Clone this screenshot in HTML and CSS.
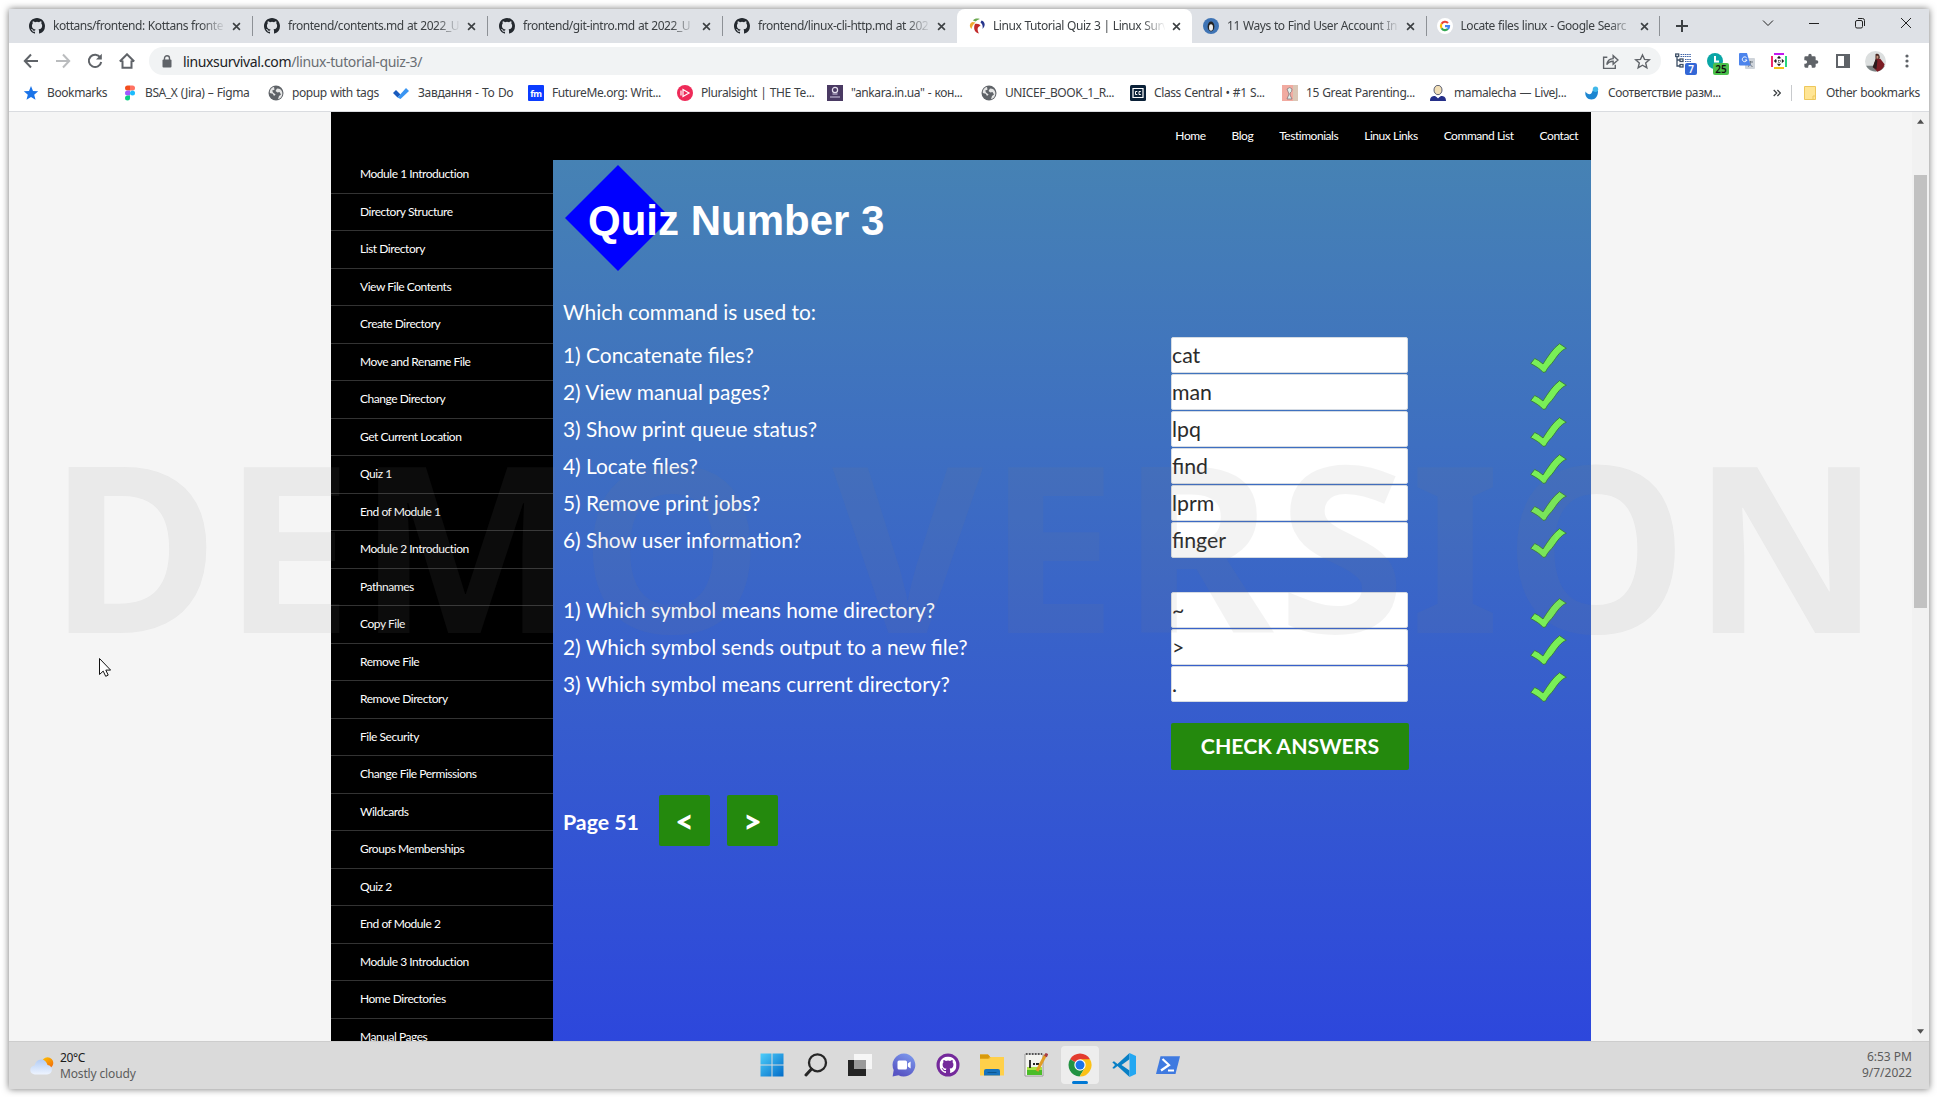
FILE: index.html
```html
<!DOCTYPE html>
<html lang="en">
<head>
<meta charset="utf-8">
<title>Linux Tutorial Quiz 3 | Linux Survival</title>
<link rel="stylesheet" href="styles.css">
</head>
<body>
<svg width="0" height="0" class="defs">
  <symbol id="github" viewBox="0 0 16 16"><path fill="currentColor" d="M8 0C3.58 0 0 3.58 0 8c0 3.54 2.29 6.53 5.47 7.59.4.07.55-.17.55-.38v-1.49c-2.01.37-2.53-.49-2.69-.94-.09-.23-.48-.94-.82-1.13-.28-.15-.68-.52-.01-.53.63-.01 1.08.58 1.23.82.72 1.21 1.87.87 2.33.66.07-.52.28-.87.51-1.07-1.78-.2-3.64-.89-3.64-3.95 0-.87.31-1.59.82-2.15-.08-.2-.36-1.02.08-2.12 0 0 .67-.21 2.2.82a7.6 7.6 0 0 1 4 0c1.53-1.04 2.2-.82 2.2-.82.44 1.1.16 1.92.08 2.12.51.56.82 1.27.82 2.15 0 3.07-1.87 3.75-3.65 3.95.29.25.54.73.54 1.48v2.2c0 .21.15.46.55.38A8 8 0 0 0 16 8c0-4.42-3.58-8-8-8z"/></symbol>
  <symbol id="close" viewBox="0 0 10 10"><path d="M1.2 1.2l7.6 7.6M8.8 1.2L1.2 8.8" stroke="#3c4043" stroke-width="1.8"/></symbol>
  <symbol id="globe" viewBox="0 0 16 16"><circle cx="8" cy="8" r="7.5" fill="#5f6368"/><path d="M6 1.800c-3 1-4.500 3.500-4.200 6.200l3 .8 1.200 2.200 1.600-1.600L5 7.500 4.200 5.500 6.500 4.800zM9 3.500L7.500 6l2 1.500 2-.5L13 9.500 11 11l-1 3.200c3-.7 4.600-3.500 4.300-6.500C14 5 12 3.500 9 3.500z" fill="#f4f4f4" opacity=".9"/></symbol>
  <symbol id="check" viewBox="0 0 37 30"><path d="M.7 20.500l4-5 3.800 2 4.500 3.500C18 13 23 5.500 29.500.7l6.800 4.600c-5 1.700-9 7.500-12.300 12.300-3 4.300-6.500 6.500-8.500 11.400l-2.500.3C9.500 25 5 23 .7 20.500z" fill="#79ef57" stroke="#35772f" stroke-width=".8"/></symbol>
</svg>

<div class="screen">
  <div class="tabs">
    <div class="tab"><svg class="fav"><use href="#github"/></svg><span class="tab-name">kottans/frontend: Kottans fronte</span><svg class="x"><use href="#close"/></svg></div>
    <div class="tab"><svg class="fav"><use href="#github"/></svg><span class="tab-name">frontend/contents.md at 2022_U</span><svg class="x"><use href="#close"/></svg></div>
    <div class="tab"><svg class="fav"><use href="#github"/></svg><span class="tab-name">frontend/git-intro.md at 2022_U</span><svg class="x"><use href="#close"/></svg></div>
    <div class="tab before-active"><svg class="fav"><use href="#github"/></svg><span class="tab-name">frontend/linux-cli-http.md at 202</span><svg class="x"><use href="#close"/></svg></div>
    <div class="tab active"><svg class="fav" viewBox="0 0 16 16"><path d="M4 2.500C5.500.5 8 0 11 1 9 1.500 8 2.500 6.500 3.500z" fill="#6aa84f"/><path d="M12.500 2.500c3.500 1 4.500 5 1 8.500.5-3 0-5-2-6.500z" fill="#26358c"/><path d="M3.500 4l3 .5C4 6.500 3 8.500 2.500 11 0 8.500.5 5 3.500 4z" fill="#f0a830"/><path d="M6 6c3-.5 5 .5 5.500 2-3.500.5-3.500 4-1.500 7.500C5.500 15 4 10 6 6z" fill="#c22a2a"/></svg><span class="tab-name">Linux Tutorial Quiz 3 | Linux Surv</span><svg class="x"><use href="#close"/></svg></div>
    <div class="tab late"><svg class="fav" viewBox="0 0 16 16"><circle cx="8" cy="8" r="8" fill="#3f74b5"/><ellipse cx="8" cy="8.500" rx="3.400" ry="5" fill="#222"/><ellipse cx="8" cy="9.500" rx="2" ry="3.200" fill="#eee"/></svg><span class="tab-name">11 Ways to Find User Account In</span><svg class="x"><use href="#close"/></svg></div>
    <div class="tab late"><svg class="fav" viewBox="0 0 16 16"><circle cx="8" cy="8" r="8" fill="#fff"/><g fill="none" stroke-width="2.200"><path d="M4.600 5.800A4 4 0 0 1 11 5" stroke="#ea4335"/><path d="M4.600 5.800a4 4 0 0 0 0 4.400" stroke="#fbbc05"/><path d="M4.600 10.200A4 4 0 0 0 10.800 11" stroke="#34a853"/><path d="M10.800 11A4 4 0 0 0 12 8.200H8" stroke="#4285f4"/></g></svg><span class="tab-name">Locate files linux - Google Searc</span><svg class="x"><use href="#close"/></svg></div>
    <svg class="plus" viewBox="0 0 12 12"><path d="M6 0v12M0 6h12" stroke="#3c4043" stroke-width="2"/></svg>
    <div class="win-controls">
      <svg viewBox="0 0 12 12"><path d="M1 3.500l5 5 5-5"/></svg>
      <svg viewBox="0 0 12 12"><path d="M1 6.500h10"/></svg>
      <svg viewBox="0 0 12 12"><rect x="1.500" y="3.500" width="7" height="7.500" rx="1.500"/><path d="M4 1.500h4.500a2 2 0 0 1 2 2V9"/></svg>
      <svg viewBox="0 0 12 12"><path d="M1 1l10 10M11 1L1 11"/></svg>
    </div>
  </div>

  <div class="toolbar">
    <svg viewBox="0 0 16 16"><path d="M15 8H2M8 1.500L1.800 8 8 14.500"/></svg>
    <svg class="dim" viewBox="0 0 16 16"><path d="M1 8h13M8 1.500L14.200 8 8 14.500"/></svg>
    <svg viewBox="0 0 16 16"><path d="M13.300 4.500A6.200 6.200 0 1 0 14.200 9"/><path d="M14.800.8v5.700H9z" fill="#5f6368" stroke="none"/></svg>
    <svg viewBox="0 0 16 16"><path d="M3.500 7.500v7.300h9V7.500M.8 8.500L8 1.300l7.200 7.200M3.500 8H1M12.500 8H15"/></svg>
    <div class="omnibox">
      <svg class="lock" viewBox="0 0 10 13"><rect x="0.500" y="4.500" width="9" height="8" rx="1" fill="#5f6368"/><path d="M2.500 5V3.300a2.500 2.500 0 0 1 5 0V5" fill="none" stroke="#5f6368" stroke-width="1.400"/></svg>
      <span class="url"><b>linuxsurvival.com</b>/linux-tutorial-quiz-3/</span>
      <svg class="share" viewBox="0 0 16 16"><path d="M5 4H1.500v10.500h11V11M4.500 11c.5-4 2.500-5.500 6-5.700V2.500L15 6.500l-4.500 4V7.800C8 7.800 6 8.500 4.500 11z"/></svg>
      <svg class="star" viewBox="0 0 16 16"><path d="M8 1.800l1.900 4.200 4.600.4-3.500 3 1.100 4.500L8 11.500l-4.100 2.400L5 9.400l-3.500-3 4.600-.4z"/></svg>
    </div>
    <div class="extensions">
      <span class="ext"><svg viewBox="0 0 16 16"><g stroke="#3d4f66" stroke-width="1.300" fill="none"><rect x=".7" y="1" width="3" height="2.500"/><path d="M2 4v9h3M2 7h3"/><rect x="5" y="6" width="3" height="2.500"/><rect x="5" y="11.500" width="3" height="2.500"/></g><path d="M5.500 1.500H16M5.500 3.500H16M10 6.500h6M10 8.500h6" stroke="#3d62a8" stroke-dasharray="1.500 .7" stroke-width="1.200"/></svg><i class="badge blue">7</i></span>
      <span class="ext"><svg viewBox="0 0 16 16"><circle cx="8" cy="8" r="8" fill="#0aa6a6"/><path d="M8 3v5.500h4" stroke="#fff" stroke-width="2" fill="none"/></svg><i class="badge green">25</i></span>
      <span class="ext"><svg viewBox="0 0 16 16"><rect x="6" y="5" width="10" height="11" rx="1" fill="#cfd4da"/><path d="M9 9h5M11.500 8v1.500c0 2-1 3-2.500 4M10 10.500l3.500 3.500" stroke="#6c7680" fill="none"/><path d="M1 0h7l3.500 12.500H1a1 1 0 0 1-1-1V1a1 1 0 0 1 1-1z" fill="#4c84ec"/><path d="M7.600 4.800A2.400 2.400 0 1 0 8 7H5.800" stroke="#fff" fill="none"/></svg></span>
      <span class="ext"><svg viewBox="0 0 16 16"><path d="M3 1h10" stroke="#c218f0" stroke-width="2"/><path d="M1 3v11" stroke="#ee2a6b" stroke-width="2"/><path d="M15 3v11" stroke="#27d67d" stroke-width="2"/><path d="M3 15h10" stroke="#f2c014" stroke-width="2"/><path d="M8 2.800l2.200 2.400H5.800zM8 13.200l2.200-2.400H5.800zM2.800 8l2.400-2.200v4.400zM13.200 8l-2.400-2.200v4.400z" fill="#222"/><path d="M5 8h6M8 5v6" stroke="#222" stroke-dasharray="1 1"/></svg></span>
      <span class="ext"><svg viewBox="0 0 24 24"><path fill="#5f6368" d="M20.500 11H19V7a2 2 0 0 0-2-2h-4V3.500a2.500 2.500 0 0 0-5 0V5H4a2 2 0 0 0-2 2v3.800h1.500a2.700 2.700 0 0 1 0 5.400H2V20a2 2 0 0 0 2 2h3.800v-1.500a2.700 2.700 0 0 1 5.400 0V22H17a2 2 0 0 0 2-2v-4h1.500a2.500 2.500 0 0 0 0-5z"/></svg></span>
      <span class="ext"><svg viewBox="0 0 16 16"><rect x="2" y="2" width="12" height="12" fill="none" stroke="#5f6368" stroke-width="2"/><path d="M9 2h5v12H9z" fill="#5f6368"/></svg></span>
      <span class="ext avatar"><svg viewBox="0 0 22 22"><circle cx="11" cy="11" r="11" fill="#dcdfdf"/><path d="M1.200 15.500h19.600A11 11 0 0 1 1.200 15.500z" fill="#7b8283"/><path d="M11 3.500c2.500-1.500 4.500.5 4.500 3.500L14 10l-3 1z" fill="#4a2a24"/><path d="M12 5h2v3h-2z" fill="#c9937c"/><path d="M11 9l5-1 4.500 6A11 11 0 0 1 13 21.800L8.500 17z" fill="#7c1c24"/><path d="M11 9l2 1-1 9-4-2z" fill="#2b1a1c"/></svg></span>
      <span class="ext"><svg viewBox="0 0 16 16"><g fill="#5f6368"><circle cx="8" cy="3" r="1.600"/><circle cx="8" cy="8" r="1.600"/><circle cx="8" cy="13" r="1.600"/></g></svg></span>
    </div>
  </div>

  <div class="bookmarks">
    <div class="bm"><svg viewBox="0 0 16 16"><path fill="#1a73e8" d="M8 1l2 5 5.200.3-4 3.400 1.300 5.100L8 12l-4.500 2.800 1.300-5.100-4-3.400L6 6z"/></svg><span>Bookmarks</span></div>
    <div class="bm figma"><svg viewBox="0 0 16 16"><path d="M5.500.5H8v5H5.500a2.500 2.500 0 0 1 0-5z" fill="#f24e1e"/><path d="M8 .5h2.500a2.500 2.500 0 0 1 0 5H8z" fill="#ff7262"/><path d="M5.500 5.500H8v5H5.500a2.500 2.500 0 0 1 0-5z" fill="#a259ff"/><circle cx="10.500" cy="8" r="2.500" fill="#1abcfe"/><path d="M5.500 10.500H8V13a2.500 2.500 0 1 1-2.500-2.500z" fill="#0acf83"/></svg><span>BSA_X (Jira) – Figma</span></div>
    <div class="bm"><svg><use href="#globe"/></svg><span>popup with tags</span></div>
    <div class="bm todo"><svg viewBox="0 0 16 16"><path d="M0 8l3-3 4.500 4.500-3 3z" fill="#185abd"/><path d="M4.500 12.500L13 3l3 3-8.500 8z" fill="#3a95f2"/></svg><span>Завдання - To Do</span></div>
    <div class="bm"><svg viewBox="0 0 16 16"><rect width="16" height="16" rx="1" fill="#0b3cff"/><text x="8" y="11.500" text-anchor="middle" class="fm">fm</text></svg><span>FutureMe.org: Writ...</span></div>
    <div class="bm"><svg viewBox="0 0 16 16"><circle cx="8" cy="8" r="8" fill="#ee2a58"/><path d="M6 4.500L12 8l-6 3.500zM4 5.500v5" fill="none" stroke="#fff" stroke-width="1.200"/></svg><span>Pluralsight | THE Te...</span></div>
    <div class="bm"><svg viewBox="0 0 16 16"><rect width="16" height="16" fill="#4a3a63"/><circle cx="8" cy="5" r="2.600" fill="none" stroke="#e6e1ee" stroke-width="1.200"/><path d="M5.500 9h5M3 12h10" stroke="#a79cba" stroke-width="1.400"/></svg><span>"ankara.in.ua" - кон...</span></div>
    <div class="bm"><svg><use href="#globe"/></svg><span>UNICEF_BOOK_1_R...</span></div>
    <div class="bm"><svg viewBox="0 0 16 16"><rect width="16" height="16" rx="1.500" fill="#0b2138"/><path d="M3 3.500h10v9H3z" fill="none" stroke="#fff" stroke-width="1.200"/><path d="M7.300 6.500H5.500v3h1.800M10.800 6.500H9v3h1.800" fill="none" stroke="#fff"/></svg><span>Class Central • #1 S...</span></div>
    <div class="bm"><svg viewBox="0 0 16 16"><rect width="16" height="16" fill="#f1aaa0"/><rect x="11" width="5" height="16" fill="#dbc6b5"/><path d="M5 4q3-3 5 0 0 3-2 4v2l2 4H5l2-5z" fill="#dff0ed" stroke="#8b7377" stroke-width=".8"/></svg><span>15 Great Parenting...</span></div>
    <div class="bm"><svg viewBox="0 0 16 16"><ellipse cx="8" cy="5" rx="4" ry="4.700" fill="#f2dfb6" stroke="#333a55" stroke-width=".8"/><path d="M0 16c0-4 2-5 5-5l3 2 3-2c3 0 5 1 5 5z" fill="#252f88"/><path d="M6.500 11h3L8 13.500z" fill="#fff"/></svg><span>mamalecha — LiveJ...</span></div>
    <div class="bm"><svg viewBox="0 0 16 16"><path d="M1.500 6.500C4 10.500 8 10 8.500 5.500L14 6c0 5.500-2.500 8.500-6.500 8.500S.500 11 1.500 6.500z" fill="#1c86d1"/><circle cx="11.500" cy="4.200" r="2.700" fill="#42b8e9"/></svg><span>Соответствие разм...</span></div>
    <svg class="more" viewBox="0 0 8 8"><path d="M.7 1l3 3-3 3M4.400 1l3 3-3 3" fill="none" stroke="#3c4043" stroke-width="1.300"/></svg>
    <div class="bm other"><svg viewBox="0 0 12 14"><path d="M.5.500h11v13H.5z" fill="#ffe594" stroke="#edc75c"/><path d="M9 13.500V10h2.500" fill="none" stroke="#edc75c"/></svg><span>Other bookmarks</span></div>
  </div>

  <div class="viewport">
    <div class="site">
      <div class="topnav"><a>Home</a><a>Blog</a><a>Testimonials</a><a>Linux Links</a><a>Command List</a><a>Contact</a></div>
      <div class="sidebar">
        <a>Module 1 Introduction</a><a>Directory Structure</a><a>List Directory</a><a>View File Contents</a><a>Create Directory</a><a>Move and Rename File</a><a>Change Directory</a><a>Get Current Location</a><a>Quiz 1</a><a>End of Module 1</a><a>Module 2 Introduction</a><a>Pathnames</a><a>Copy File</a><a>Remove File</a><a>Remove Directory</a><a>File Security</a><a>Change File Permissions</a><a>Wildcards</a><a>Groups Memberships</a><a>Quiz 2</a><a>End of Module 2</a><a>Module 3 Introduction</a><a>Home Directories</a><a>Manual Pages</a>
      </div>
      <div class="content">
        <div class="heading"><svg class="diamond" viewBox="0 0 106 106"><path d="M53 0l53 53-53 53L0 53z" fill="#00f"/></svg><h1>Quiz Number 3</h1></div>
        <p class="lead">Which command is used to:</p>
        <div class="questions">
          <div class="q"><span>1) Concatenate files?</span><div class="answer">cat</div><svg><use href="#check"/></svg></div>
          <div class="q"><span>2) View manual pages?</span><div class="answer">man</div><svg><use href="#check"/></svg></div>
          <div class="q"><span>3) Show print queue status?</span><div class="answer">lpq</div><svg><use href="#check"/></svg></div>
          <div class="q"><span>4) Locate files?</span><div class="answer">find</div><svg><use href="#check"/></svg></div>
          <div class="q"><span>5) Remove print jobs?</span><div class="answer">lprm</div><svg><use href="#check"/></svg></div>
          <div class="q"><span>6) Show user information?</span><div class="answer">finger</div><svg><use href="#check"/></svg></div>
        </div>
        <div class="questions">
          <div class="q"><span>1) Which symbol means home directory?</span><div class="answer">~</div><svg><use href="#check"/></svg></div>
          <div class="q"><span>2) Which symbol sends output to a new file?</span><div class="answer">&gt;</div><svg><use href="#check"/></svg></div>
          <div class="q"><span>3) Which symbol means current directory?</span><div class="answer">.</div><svg><use href="#check"/></svg></div>
        </div>
        <div class="submit">CHECK ANSWERS</div>
        <div class="pager"><span>Page 51</span><div class="step">&lt;</div><div class="step">&gt;</div></div>
      </div>
    </div>
    <div class="scrollbar"><svg viewBox="0 0 8 5"><path d="M4 0l4 5H0z"/></svg><div class="thumb"></div><svg viewBox="0 0 8 5"><path d="M0 0h8L4 5z"/></svg></div>
  </div>

  <div class="taskbar">
    <div class="weather">
      <svg viewBox="0 0 24 18"><defs><linearGradient id="cl" x2="0" y2="1"><stop stop-color="#b3cdf5"/><stop offset="1" stop-color="#eef4ff"/></linearGradient><linearGradient id="sun" x2=".6" y2="1"><stop stop-color="#ffc400"/><stop offset="1" stop-color="#f26f0c"/></linearGradient></defs><circle cx="17.500" cy="6" r="5.800" fill="url(#sun)"/><path d="M5 17.500a4.500 4.500 0 0 1-.5-9C5.500 4.500 8 2.500 11 2.500c3.500 0 5.500 2 6.500 5.500 6 .5 6 9-.5 9.500z" fill="url(#cl)"/></svg>
      <div><span class="temp">20°C</span><span>Mostly cloudy</span></div>
    </div>
    <div class="apps">
      <div class="app"><svg viewBox="0 0 24 24"><defs><linearGradient id="win" gradientUnits="userSpaceOnUse" x1="0" y1="0" x2="24" y2="24"><stop stop-color="#4fd0fb"/><stop offset="1" stop-color="#0069c7"/></linearGradient></defs><path d="M.5.500h11v11H.5zM12.500.500h11v11h-11zM.5 12.500h11v11H.5zM12.500 12.500h11v11h-11z" fill="url(#win)"/></svg></div>
      <div class="app"><svg viewBox="0 0 24 24"><circle cx="13.500" cy="9.800" r="8.500" fill="none" stroke="#262626" stroke-width="2.300"/><path d="M7.500 16L2 22" stroke="#262626" stroke-width="3" stroke-linecap="round"/></svg></div>
      <div class="app"><svg viewBox="0 0 24 24"><rect y="7" width="18" height="16" fill="#242424"/><rect x="6" y="1" width="18" height="15" fill="#f6f6f6"/><rect x="6" y="7" width="12" height="9" fill="#9a9a9a"/></svg></div>
      <div class="app"><svg viewBox="0 0 24 24"><defs><linearGradient id="chat" x1="1" x2=".5" y2="1"><stop stop-color="#7f9ff0"/><stop offset="1" stop-color="#5855c4"/></linearGradient></defs><path d="M12 .5a11.500 11.500 0 1 1-5.500 21.700L.6 23.500 1.700 17A11.500 11.500 0 0 1 12 .5z" fill="url(#chat)"/><rect x="5.500" y="7.500" width="9.500" height="9" rx="1.500" fill="#fff"/><path d="M15.800 10.500l2.800-2v7l-2.800-2z" fill="#fff"/></svg></div>
      <div class="app white"><svg viewBox="0 0 24 24"><circle cx="12" cy="12" r="11.500" fill="#74299b"/><use href="#github" x="3.500" y="3.500" width="17" height="17"/></svg></div>
      <div class="app"><svg viewBox="0 0 24 24"><path d="M0 1.500h8l2 2.500h14v18H0z" fill="#f1b52c"/><path d="M0 1.500h8l2 2-2 2H0z" fill="#d89a0c"/><path d="M0 6h9l2-2h13v18.500H0z" fill="#ffd04a"/><path d="M4 22.500V18a2 2 0 0 1 2-2h12a2 2 0 0 1 2 2v4.500z" fill="#1672bd"/><path d="M7.500 19.500h9" stroke="#0a568f"/></svg></div>
      <div class="app"><svg viewBox="0 0 24 24"><path d="M1 1h18v22H1z" fill="#f4f4f0" stroke="#999"/><path d="M3 14h15v8H3z" fill="#a7e343"/><path d="M3 17h15v5H3z" fill="#4bbd29"/><path d="M2 1h16" stroke="#555" stroke-dasharray="1.500 1.500" stroke-width="2"/><path d="M6 7v8M9 11h2M12 11h3" stroke="#222" stroke-width="1.800"/><path d="M21.500 2L13 18" stroke="#e19d26" stroke-width="3"/><path d="M23 .5l-1.500 3" stroke="#a63e48" stroke-width="3"/></svg></div>
      <div class="app current"><svg viewBox="0 0 24 24"><path d="M12 12L2.100 6.200A11.500 11.500 0 0 1 22 6.300z" fill="#e33b2e"/><path d="M12 12L2.100 6.200A11.500 11.500 0 0 0 11.500 23.500l5.500-8.700z" fill="#229342"/><path d="M12 6.300h10A11.500 11.500 0 0 1 11.500 23.500L17 14.800z" fill="#fbc116"/><circle cx="12" cy="12" r="5.700" fill="#fff"/><circle cx="12" cy="12" r="4.500" fill="#1a73e8"/></svg></div>
      <div class="app"><svg viewBox="0 0 24 24"><path d="M17.500 0L5.500 11 2 8.300.3 9.200 3 12l-2.700 2.900L2 15.800 5.500 13l12 11V17.500L9.500 12l8-5.700z" fill="#087fc5"/><path d="M17.500 0L24 3v18l-6.500 3z" fill="#23a7f2"/></svg></div>
      <div class="app"><svg viewBox="0 0 24 24"><path d="M4.500 3.200H24L19.500 21H0z" fill="#3f7ae0"/><path d="M6.500 6l6.500 6-8 5.500M12 17.500h6" fill="none" stroke="#fff" stroke-width="2.200"/></svg></div>
    </div>
    <div class="clock"><span>6:53 PM</span><span>9/7/2022</span></div>
  </div>
  <div class="watermark">DEMO VERSION</div>
  <svg class="cursor" viewBox="0 0 12 19"><path d="M.5.500v16l3.700-3.400 2.500 5.200 2.500-1.200-2.400-5h4.800z" fill="#fff" stroke="#111"/></svg>
</div>
</body>
</html>
```
FILE: styles.css
```css
* { box-sizing: border-box; }
body { margin: 0; background: #fff; width: 1937px; height: 1097px; padding: 9px 8px 8px 9px; overflow: hidden; font-family: "Noto Sans", sans-serif; font-size: 12px; }
.defs { position: absolute; }
svg { display: block; flex: none; }
.screen { position: relative; width: 1920px; height: 1080px; display: flex; flex-direction: column; box-shadow: 0 0 7px rgba(0,0,0,.55); background: #fff; }

/* tab strip */
.tabs { height: 34px; background: #dee1e6; display: flex; align-items: center; padding-left: 8px; color: #3c4043; }
.tab { position: relative; width: 235px; height: 34px; display: flex; align-items: center; padding-left: 12px; }
.tab.late { width: 233.5px; padding-left: 11px; }
.tab:not(.before-active):not(.active)::after { content: ""; position: absolute; right: -1px; top: 7px; width: 1px; height: 20px; background: #8d9196; }
.tab.active { background: #fff; border-radius: 8px 8px 0 0; }
.fav { width: 16px; height: 16px; color: #24292f; }
.tab-name { margin-left: 8px; width: 172px; white-space: nowrap; letter-spacing: -.45px; word-spacing: .5px; line-height: 20px; -webkit-mask-image: linear-gradient(to right, #000 148px, transparent 173px); mask-image: linear-gradient(to right, #000 148px, transparent 173px); }
.x { width: 9px; height: 9px; margin-left: 7px; }
.plus { width: 12px; height: 12px; margin-left: 17px; }
.win-controls { margin-left: auto; display: flex; gap: 34px; padding-right: 17px; height: 100%; padding-top: 8px; }
.win-controls svg { width: 12px; height: 12px; fill: none; stroke: #222; }

/* address bar */
.toolbar { height: 36px; display: flex; align-items: center; padding-left: 14px; }
.toolbar > svg { width: 16px; height: 16px; margin-right: 16px; fill: none; stroke: #5f6368; stroke-width: 2; }
.toolbar > .dim { stroke: #babcbe; }
.omnibox { margin-left: -2px; width: 1512px; height: 28px; border-radius: 14px; background: #f1f3f4; display: flex; align-items: center; padding-left: 13px; }
.lock { width: 10px; height: 13px; }
.url { margin-left: 11px; font-size: 14px; letter-spacing: -.37px; color: #6a6e73; }
.url b { font-weight: 400; color: #202124; }
.share, .star { width: 17px; height: 17px; fill: none; stroke: #5f6368; stroke-width: 1.3; }
.share { margin-left: auto; }
.star { margin: 0 10px 0 15px; }
.extensions { display: grid; grid-template-columns: repeat(8, 32px); margin-left: 6px; }
.ext { position: relative; height: 22px; display: flex; align-items: center; justify-content: center; }
.ext svg { width: 16px; height: 16px; }
.avatar svg { width: 21px; height: 21px; }
.badge { position: absolute; left: 18px; top: 13px; width: 12px; height: 12px; border-radius: 2px; font: 600 10px/12px "Noto Sans", sans-serif; text-align: center; color: #fff; background: #3367d6; }
.badge.green { left: 14px; width: 16px; background: #4bc04b; color: #111; }

/* bookmarks */
.bookmarks { height: 33px; border-bottom: 1px solid #dadce0; display: grid; align-items: center; padding: 0 0 5px 14px; color: #3c4043;
  grid-template-columns: 99px 146px 125px 135px 149px 150px 154px 149px 152px 148px 154px 189px 18px 138px; }
.bm { display: flex; align-items: center; height: 20px; white-space: nowrap; letter-spacing: -.4px; word-spacing: .6px; }
.bm svg { width: 16px; height: 16px; margin-right: 8px; }
.figma svg { margin-right: 7px; }
.todo { letter-spacing: -.3px; }
.todo svg { margin-right: 9px; }
.more { width: 8px; height: 8px; }
.other { border-left: 1px solid #c8cacd; height: 16px; padding-left: 12px; }
.bm.other svg { width: 12px; height: 14px; margin-right: 10px; }
.fm { font: 700 9px "Noto Sans", sans-serif; fill: #fff; }

/* web page */
.viewport { height: 929px; background: #f5f5f5; display: flex; overflow: hidden; }
.site { width: 1260px; margin-left: 322px; background: #000; display: grid; grid-template-columns: 222px 1fr; grid-template-rows: 48px 881px; font-family: Lato, sans-serif; color: #fff; }
.topnav { grid-column: 1 / 3; display: flex; justify-content: flex-end; align-items: center; gap: 26px; padding: 0 13px 2px 0; font-size: 12px; letter-spacing: -.46px; }
.sidebar { margin-top: -4px; height: 885px; overflow: hidden; font-size: 12px; letter-spacing: -.46px; }
.sidebar a { display: flex; align-items: center; height: 37.5px; padding: 0 0 1px 29px; border-bottom: 1px solid #333; }
.content { background: linear-gradient(#4682b4, #2d47dc); padding: 5px 0 0 10px; font-size: 20.9px; }
.heading { display: flex; height: 106px; align-items: center; }
.diamond { width: 106px; height: 106px; margin-left: 2px; }
h1 { margin: 6px 0 0 -83px; font: bold 42px/48px "Liberation Sans", sans-serif; white-space: nowrap; position: relative; }
.lead { margin: 26px 0 0; line-height: 30px; }
.questions { margin-top: 10px; display: grid; grid-auto-rows: 37px; }
.questions + .questions { margin-top: 33px; }
.q { display: grid; grid-template-columns: 608px 359px 37px; align-items: start; line-height: 36px; }
.answer { width: 237px; height: 36px; border: 1px solid #d5dbe3; border-radius: 2px; background: #fff; color: #2b2b2b; font-size: 21.3px; line-height: 34px; }
.q svg { width: 37px; height: 30px; margin-top: 6px; }
.submit { width: 238px; height: 47px; margin: 20px 0 0 608px; border-radius: 2px; background: #24890d; font-size: 21.3px; font-weight: 700; line-height: 47px; text-align: center; }
.pager { margin-top: 25px; display: flex; align-items: center; font-size: 21.3px; font-weight: 700; }
.pager span { width: 96px; margin-top: 2px; }
.step { width: 51px; height: 51px; margin-right: 17px; border-radius: 2px; background: #24890d; font-size: 32px; font-weight: 900; line-height: 51px; text-align: center; }
.scrollbar { width: 17px; margin-left: auto; background: #f1f1f1; display: flex; flex-direction: column; align-items: center; padding: 7px 0; }
.scrollbar svg { width: 7px; height: 5px; fill: #505050; }
.thumb { width: 13px; height: 433px; margin: 51px 0 auto; background: #c1c1c1; }

/* taskbar */
.taskbar { height: 48px; background: #dadada; border-top: 1px solid #cdcdcd; display: grid; grid-template-columns: 741px 440px 722px; color: #5c5c5c; line-height: 16px; }
.weather { display: flex; align-items: center; padding-left: 21px; gap: 6px; letter-spacing: -.15px; }
.weather svg { width: 24px; height: 18px; }
.weather div, .clock { display: flex; flex-direction: column; }
.weather .temp { color: #1b1b1b; letter-spacing: -.4px; }
.apps { display: grid; grid-template-columns: repeat(10, 44px); align-items: center; justify-items: center; }
.app { position: relative; width: 38px; height: 38px; margin-top: -1px; display: flex; align-items: center; justify-content: center; }
.app svg { width: 24px; height: 24px; }
.white { color: #fff; }
.current { background: #ededed; border-radius: 4px; }
.current::after { content: ""; position: absolute; left: 11px; bottom: 0; width: 16px; height: 3px; border-radius: 2px; background: #0078d4; }
.clock { align-items: flex-end; justify-content: center; padding-bottom: 1px; }

.watermark { position: absolute; left: 40px; top: 376px; font: 700 232px/316px "Noto Sans", sans-serif; letter-spacing: 4.2px; white-space: nowrap; color: rgba(128,128,128,.095); }
.cursor { position: absolute; left: 90px; top: 649px; width: 12px; height: 19px; }
```
